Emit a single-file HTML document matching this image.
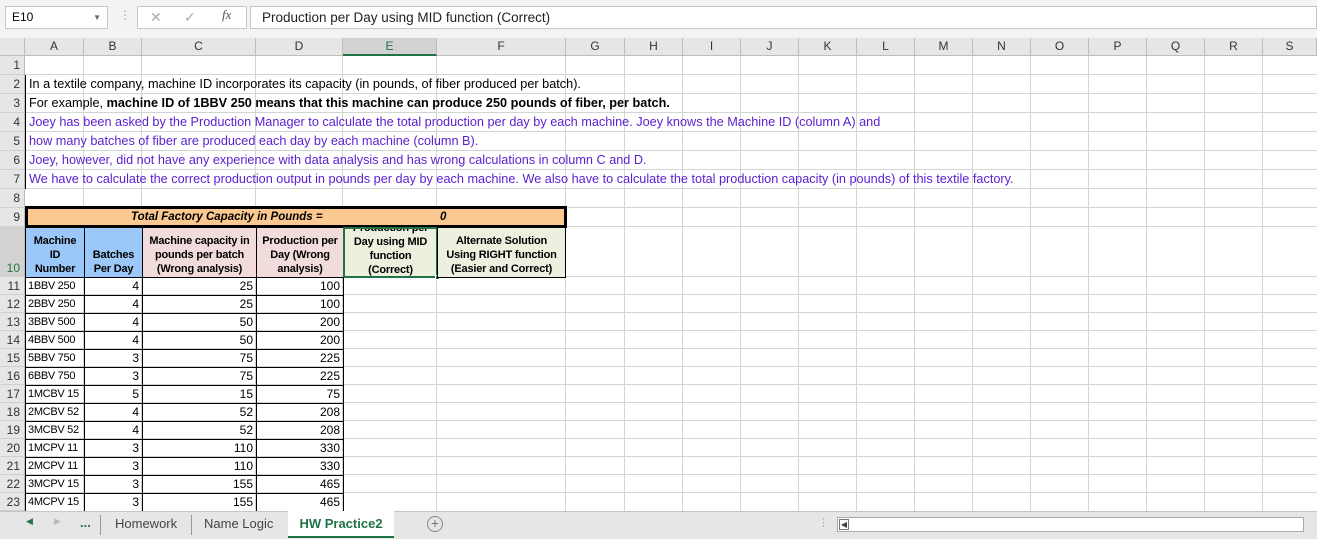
<!DOCTYPE html>
<html><head><meta charset="utf-8"><style>
*{margin:0;padding:0;box-sizing:border-box}
body{width:1317px;height:539px;overflow:hidden;background:#fff;font-family:"Liberation Sans",Arial,sans-serif;font-size:12px;color:#000;position:relative}
.a{position:absolute}
.vl{position:absolute;top:56px;height:455px;width:1px;background:#d4d4d4}
.hl{position:absolute;left:25px;width:1292px;height:1px;background:#d4d4d4}
.rh{position:absolute;left:0;width:25px;background:#e6e6e6;border-right:1px solid #bdbdbd;border-bottom:1px solid #d0d0d0;text-align:right;padding-right:4px;font-size:12px;color:#333}
.ch{position:absolute;top:38px;height:18px;background:#e6e6e6;border-right:1px solid #bdbdbd;border-bottom:1px solid #bdbdbd;text-align:center;line-height:17px;font-size:12px;color:#333}
.t{position:absolute;left:29px;white-space:nowrap;font-size:12.7px;line-height:19px}
.p{color:#5a1ed0}
.c{position:absolute;height:19px;border:1px solid #000;border-top:none;line-height:18px;white-space:nowrap;padding:0 3px;font-size:12px;overflow:hidden}
.l{font-size:11px;letter-spacing:-0.3px;padding:0 2px}
.r{text-align:right}
.hd{position:absolute;top:227px;height:51px;border:1px solid #000;font-weight:bold;font-size:11px;text-align:center;line-height:14px;padding-top:6px;letter-spacing:-0.2px}
</style></head><body>
<div class="a" style="left:0;top:0;width:1317px;height:38px;background:#f3f3f3"></div>
<div class="a" style="left:5px;top:6px;width:103px;height:23px;background:#fff;border:1px solid #c6c6c6;line-height:21px;padding-left:6px">E10<span style="position:absolute;right:6px;top:0;font-size:8px;color:#666">▼</span></div>
<div class="a" style="left:119px;top:8px;color:#aaa;font-size:12px">⋮</div>
<div class="a" style="left:137px;top:6px;width:110px;height:23px;background:#fff;border:1px solid #c6c6c6"></div>
<div class="a" style="left:150px;top:9px;color:#aaa;font-size:14px">✕</div>
<div class="a" style="left:184px;top:9px;color:#aaa;font-size:14px">✓</div>
<div class="a" style="left:222px;top:7px;color:#555;font-family:'Liberation Serif',serif;font-style:italic;font-size:13px">fx</div>
<div class="a" style="left:250px;top:6px;width:1067px;height:23px;background:#fff;border:1px solid #c6c6c6;line-height:21px;padding-left:11px;font-size:13.5px;color:#222">Production per Day using MID function (Correct)</div>
<div class="a" style="left:0;top:38px;width:25px;height:18px;background:#e6e6e6;border-right:1px solid #bdbdbd;border-bottom:1px solid #bdbdbd"></div>
<div class="ch" style="left:25px;width:59px">A</div>
<div class="ch" style="left:84px;width:58px">B</div>
<div class="ch" style="left:142px;width:114px">C</div>
<div class="ch" style="left:256px;width:87px">D</div>
<div class="ch" style="left:343px;width:94px;background:#d2d2d2;border-bottom:2px solid #217346;color:#217346">E</div>
<div class="ch" style="left:437px;width:129px">F</div>
<div class="ch" style="left:566px;width:59px">G</div>
<div class="ch" style="left:625px;width:58px">H</div>
<div class="ch" style="left:683px;width:58px">I</div>
<div class="ch" style="left:741px;width:58px">J</div>
<div class="ch" style="left:799px;width:58px">K</div>
<div class="ch" style="left:857px;width:58px">L</div>
<div class="ch" style="left:915px;width:58px">M</div>
<div class="ch" style="left:973px;width:58px">N</div>
<div class="ch" style="left:1031px;width:58px">O</div>
<div class="ch" style="left:1089px;width:58px">P</div>
<div class="ch" style="left:1147px;width:58px">Q</div>
<div class="ch" style="left:1205px;width:58px">R</div>
<div class="ch" style="left:1263px;width:54px">S</div>
<div class="vl" style="left:83px"></div><div class="vl" style="left:141px"></div><div class="vl" style="left:255px"></div><div class="vl" style="left:342px"></div><div class="vl" style="left:436px"></div><div class="vl" style="left:565px"></div><div class="vl" style="left:624px"></div><div class="vl" style="left:682px"></div><div class="vl" style="left:740px"></div><div class="vl" style="left:798px"></div><div class="vl" style="left:856px"></div><div class="vl" style="left:914px"></div><div class="vl" style="left:972px"></div><div class="vl" style="left:1030px"></div><div class="vl" style="left:1088px"></div><div class="vl" style="left:1146px"></div><div class="vl" style="left:1204px"></div><div class="vl" style="left:1262px"></div>
<div class="hl" style="top:74px"></div><div class="hl" style="top:93px"></div><div class="hl" style="top:112px"></div><div class="hl" style="top:131px"></div><div class="hl" style="top:150px"></div><div class="hl" style="top:169px"></div><div class="hl" style="top:188px"></div><div class="hl" style="top:207px"></div><div class="hl" style="top:226px"></div><div class="hl" style="top:276px"></div><div class="hl" style="top:294px"></div><div class="hl" style="top:312px"></div><div class="hl" style="top:330px"></div><div class="hl" style="top:348px"></div><div class="hl" style="top:366px"></div><div class="hl" style="top:384px"></div><div class="hl" style="top:402px"></div><div class="hl" style="top:420px"></div><div class="hl" style="top:438px"></div><div class="hl" style="top:456px"></div><div class="hl" style="top:474px"></div><div class="hl" style="top:492px"></div>
<div class="rh" style="top:56px;height:19px;line-height:19px">1</div>
<div class="rh" style="top:75px;height:19px;line-height:19px">2</div>
<div class="rh" style="top:94px;height:19px;line-height:19px">3</div>
<div class="rh" style="top:113px;height:19px;line-height:19px">4</div>
<div class="rh" style="top:132px;height:19px;line-height:19px">5</div>
<div class="rh" style="top:151px;height:19px;line-height:19px">6</div>
<div class="rh" style="top:170px;height:19px;line-height:19px">7</div>
<div class="rh" style="top:189px;height:19px;line-height:19px">8</div>
<div class="rh" style="top:208px;height:19px;line-height:19px">9</div>
<div class="rh" style="top:227px;height:50px;line-height:82px;background:#d2d2d2;color:#217346">10</div>
<div class="rh" style="top:277px;height:18px;line-height:18px">11</div>
<div class="rh" style="top:295px;height:18px;line-height:18px">12</div>
<div class="rh" style="top:313px;height:18px;line-height:18px">13</div>
<div class="rh" style="top:331px;height:18px;line-height:18px">14</div>
<div class="rh" style="top:349px;height:18px;line-height:18px">15</div>
<div class="rh" style="top:367px;height:18px;line-height:18px">16</div>
<div class="rh" style="top:385px;height:18px;line-height:18px">17</div>
<div class="rh" style="top:403px;height:18px;line-height:18px">18</div>
<div class="rh" style="top:421px;height:18px;line-height:18px">19</div>
<div class="rh" style="top:439px;height:18px;line-height:18px">20</div>
<div class="rh" style="top:457px;height:18px;line-height:18px">21</div>
<div class="rh" style="top:475px;height:18px;line-height:18px">22</div>
<div class="rh" style="top:493px;height:18px;line-height:18px">23</div>
<div class="a" style="left:25px;top:75px;width:1px;height:114px;background:#000"></div>
<div class="t" style="top:75px">In a textile company, machine ID incorporates its capacity (in pounds, of fiber produced per batch).</div>
<div class="t" style="top:94px">For example, <b>machine ID of 1BBV 250 means that this machine can produce 250 pounds of fiber, per batch.</b></div>
<div class="t p" style="top:113px">Joey has been asked by the Production Manager to calculate the total production per day by each machine. Joey knows the Machine ID (column A) and</div>
<div class="t p" style="top:132px">how many batches of fiber are produced each day by each machine (column B).</div>
<div class="t p" style="top:151px">Joey, however, did not have any experience with data analysis and has wrong calculations in column C and D.</div>
<div class="t p" style="top:170px">We have to calculate the correct production output in pounds per day by each machine. We also have to calculate the total production capacity (in pounds) of this textile factory.</div>
<div class="a" style="left:25px;top:206px;width:542px;height:22px;border:2px solid #000;background:#fac890"></div>
<div class="a" style="left:27px;top:208px;width:538px;height:18px;border:1px solid #000;background:#fac890;font-weight:bold;font-style:italic;font-size:11.5px;line-height:16px"><span style="position:absolute;left:103px">Total Factory Capacity in Pounds =</span><span style="position:absolute;left:412px">0</span></div>
<div class="hd" style="left:25px;width:60px;background:#9bc8f8">Machine<br>ID<br>Number</div>
<div class="hd" style="left:84px;width:59px;background:#9bc8f8;padding-top:20px">Batches<br>Per Day</div>
<div class="hd" style="left:142px;width:115px;background:#f2dcdb">Machine capacity in<br>pounds per batch<br>(Wrong analysis)</div>
<div class="hd" style="left:256px;width:88px;background:#f2dcdb">Production per<br>Day (Wrong<br>analysis)</div>
<div class="hd" style="left:343px;width:95px;background:#ebf1de;overflow:hidden;padding-top:0;border:2px solid #217346"><div style="margin-top:-8px">Production per<br>Day using MID<br>function<br>(Correct)</div></div>
<div class="a" style="left:435px;top:275px;width:5px;height:5px;background:#217346;border:1px solid #fff"></div>
<div class="hd" style="left:437px;width:129px;background:#ebf1de">Alternate Solution<br>Using RIGHT function<br>(Easier and Correct)</div>
<div class="a" style="left:25px;top:277px">
<div style="position:relative">
<div class="c l" style="left:0;top:0;width:60px">1BBV 250</div><div class="c r" style="left:59px;top:0;width:59px">4</div><div class="c r" style="left:117px;top:0;width:115px">25</div><div class="c r" style="left:231px;top:0;width:88px">100</div>
<div class="c l" style="left:0;top:18px;width:60px">2BBV 250</div><div class="c r" style="left:59px;top:18px;width:59px">4</div><div class="c r" style="left:117px;top:18px;width:115px">25</div><div class="c r" style="left:231px;top:18px;width:88px">100</div>
<div class="c l" style="left:0;top:36px;width:60px">3BBV 500</div><div class="c r" style="left:59px;top:36px;width:59px">4</div><div class="c r" style="left:117px;top:36px;width:115px">50</div><div class="c r" style="left:231px;top:36px;width:88px">200</div>
<div class="c l" style="left:0;top:54px;width:60px">4BBV 500</div><div class="c r" style="left:59px;top:54px;width:59px">4</div><div class="c r" style="left:117px;top:54px;width:115px">50</div><div class="c r" style="left:231px;top:54px;width:88px">200</div>
<div class="c l" style="left:0;top:72px;width:60px">5BBV 750</div><div class="c r" style="left:59px;top:72px;width:59px">3</div><div class="c r" style="left:117px;top:72px;width:115px">75</div><div class="c r" style="left:231px;top:72px;width:88px">225</div>
<div class="c l" style="left:0;top:90px;width:60px">6BBV 750</div><div class="c r" style="left:59px;top:90px;width:59px">3</div><div class="c r" style="left:117px;top:90px;width:115px">75</div><div class="c r" style="left:231px;top:90px;width:88px">225</div>
<div class="c l" style="left:0;top:108px;width:60px">1MCBV 15</div><div class="c r" style="left:59px;top:108px;width:59px">5</div><div class="c r" style="left:117px;top:108px;width:115px">15</div><div class="c r" style="left:231px;top:108px;width:88px">75</div>
<div class="c l" style="left:0;top:126px;width:60px">2MCBV 52</div><div class="c r" style="left:59px;top:126px;width:59px">4</div><div class="c r" style="left:117px;top:126px;width:115px">52</div><div class="c r" style="left:231px;top:126px;width:88px">208</div>
<div class="c l" style="left:0;top:144px;width:60px">3MCBV 52</div><div class="c r" style="left:59px;top:144px;width:59px">4</div><div class="c r" style="left:117px;top:144px;width:115px">52</div><div class="c r" style="left:231px;top:144px;width:88px">208</div>
<div class="c l" style="left:0;top:162px;width:60px">1MCPV 11</div><div class="c r" style="left:59px;top:162px;width:59px">3</div><div class="c r" style="left:117px;top:162px;width:115px">110</div><div class="c r" style="left:231px;top:162px;width:88px">330</div>
<div class="c l" style="left:0;top:180px;width:60px">2MCPV 11</div><div class="c r" style="left:59px;top:180px;width:59px">3</div><div class="c r" style="left:117px;top:180px;width:115px">110</div><div class="c r" style="left:231px;top:180px;width:88px">330</div>
<div class="c l" style="left:0;top:198px;width:60px">3MCPV 15</div><div class="c r" style="left:59px;top:198px;width:59px">3</div><div class="c r" style="left:117px;top:198px;width:115px">155</div><div class="c r" style="left:231px;top:198px;width:88px">465</div>
<div class="c l" style="left:0;top:216px;width:60px;border-bottom:none">4MCPV 15</div><div class="c r" style="left:59px;top:216px;width:59px;border-bottom:none">3</div><div class="c r" style="left:117px;top:216px;width:115px;border-bottom:none">155</div><div class="c r" style="left:231px;top:216px;width:88px;border-bottom:none">465</div>
</div></div>
<div class="a" style="left:0;top:511px;width:1317px;height:28px;background:#e6e6e6;border-top:1px solid #c6c6c6"></div>
<div class="a" style="left:26px;top:516px;color:#217346;font-size:9px">◀</div>
<div class="a" style="left:54px;top:516px;color:#bbb;font-size:9px">▶</div>
<div class="a" style="left:80px;top:515px;color:#217346;font-weight:bold;font-size:13px">...</div>
<div class="a" style="left:100px;top:515px;width:1px;height:20px;background:#999"></div>
<div class="a" style="left:115px;top:516px;font-size:13px;color:#444">Homework</div>
<div class="a" style="left:191px;top:515px;width:1px;height:20px;background:#999"></div>
<div class="a" style="left:204px;top:516px;font-size:13px;color:#444">Name Logic</div>
<div class="a" style="left:288px;top:511px;width:106px;height:27px;background:#fff;border-bottom:2px solid #217346;text-align:center;line-height:25px;font-weight:bold;font-size:13px;color:#217346">HW Practice2</div>
<div class="a" style="left:427px;top:516px;width:16px;height:16px;border:1px solid #888;border-radius:50%;text-align:center;line-height:13px;color:#777;font-size:14px">+</div>
<div class="a" style="left:818px;top:516px;color:#aaa;font-size:11px">⋮</div>
<div class="a" style="left:837px;top:517px;width:467px;height:15px;background:#fff;border:1px solid #aaa"></div>
<div class="a" style="left:839px;top:519px;width:10px;height:11px;border:1px solid #777;font-size:8px;line-height:9px;text-align:center;color:#444">◀</div>
</body></html>
